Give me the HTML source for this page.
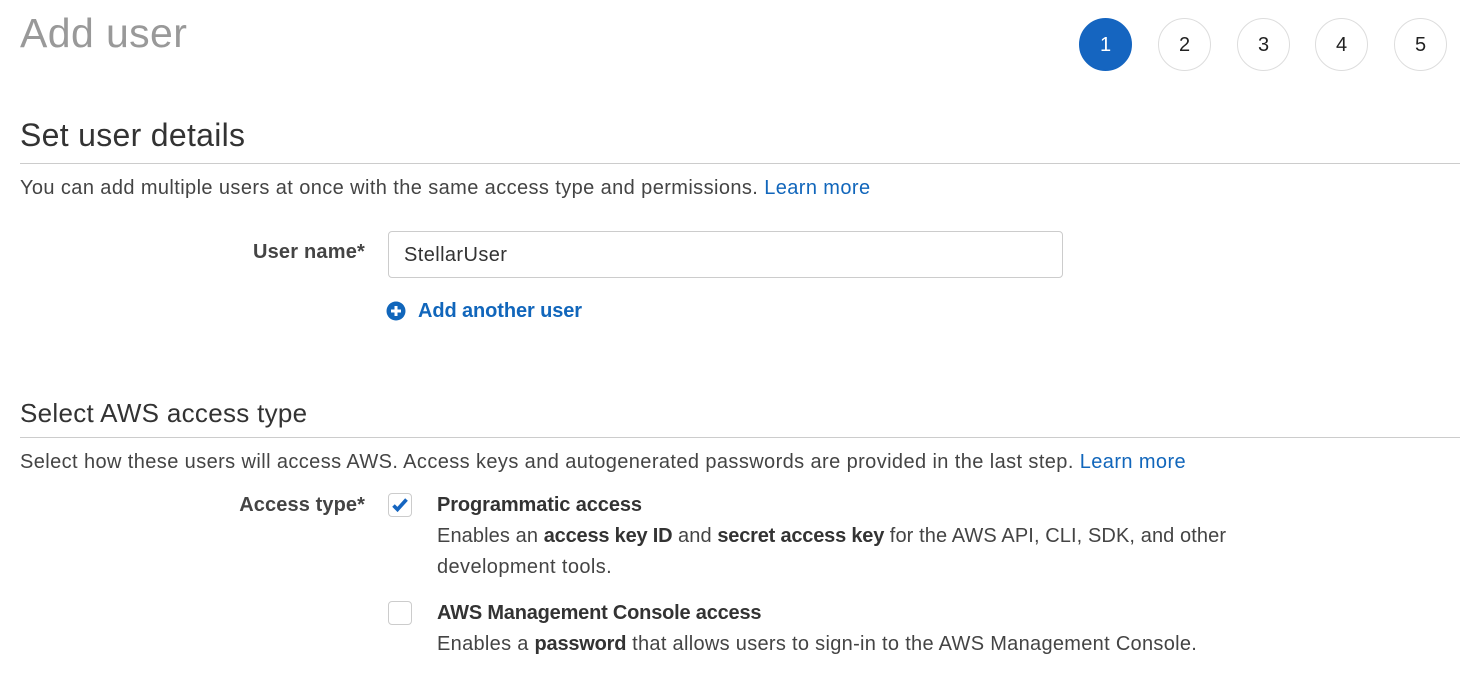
<!DOCTYPE html>
<html><head><meta charset="utf-8"><style>
body{margin:0;width:1480px;height:691px;background:#fff;font-family:"Liberation Sans",Arial,sans-serif;color:#444;position:relative;overflow:hidden}
.a{position:absolute;white-space:nowrap}
.c{position:absolute;width:51px;height:51px;border-radius:50%;border:1px solid #ddd;top:18px;text-align:center;line-height:53px;font-size:20px;color:#222;box-sizing:content-box}
.hr{position:absolute;left:20px;width:1440px;height:1px;background:#ccc}
.t{font-size:20px;letter-spacing:0.4px}
a{color:#1166bb;text-decoration:none}
b{color:#333;letter-spacing:-0.2px}
</style></head><body>
<div class="a" style="left:20px;top:10px;font-size:41px;color:#999;letter-spacing:0.4px">Add user</div>
<div class="c" style="left:1079px;background:#1565c0;border-color:#1565c0;color:#fff">1</div>
<div class="c" style="left:1158px">2</div>
<div class="c" style="left:1237px">3</div>
<div class="c" style="left:1315px">4</div>
<div class="c" style="left:1394px">5</div>
<div class="a" style="left:20px;top:117px;font-size:32px;color:#333;letter-spacing:0.3px">Set user details</div>
<div class="hr" style="top:163px"></div>
<div class="a t" style="left:20px;top:177px">You can add multiple users at once with the same access type and permissions. <a>Learn more</a></div>
<div class="a t" style="right:1115px;top:241px;font-weight:bold;color:#444;letter-spacing:0.2px">User name*</div>
<div class="a" style="left:388px;top:231px;width:673px;height:45px;border:1px solid #ccc;border-radius:4px"></div>
<div class="a t" style="left:404px;top:244px;color:#333">StellarUser</div>
<svg class="a" style="left:386px;top:301px" width="20" height="20" viewBox="0 0 20 20"><circle cx="10" cy="10" r="9.5" fill="#1166bb"/><path d="M10 5v10M5 10h10" stroke="#fff" stroke-width="3"/></svg>
<div class="a t" style="left:418px;top:300px;font-weight:bold;color:#1166bb;letter-spacing:-0.1px">Add another user</div>
<div class="a" style="left:20px;top:398px;font-size:26px;color:#333;letter-spacing:0.3px">Select AWS access type</div>
<div class="hr" style="top:437px"></div>
<div class="a t" style="left:20px;top:451px">Select how these users will access AWS. Access keys and autogenerated passwords are provided in the last step. <a>Learn more</a></div>
<div class="a t" style="right:1115px;top:494px;font-weight:bold;color:#444;letter-spacing:0.1px">Access type*</div>
<div class="a" style="left:388px;top:493px;width:22px;height:22px;border:1px solid #ccc;border-radius:4px"></div>
<svg class="a" style="left:390px;top:495px" width="20" height="20" viewBox="0 0 20 20"><path d="M3.5 10.5l4 4 9-10" stroke="#1565c0" stroke-width="3.6" fill="none"/></svg>
<div class="a t" style="left:437px;top:494px;font-weight:bold;color:#333;letter-spacing:-0.1px">Programmatic access</div>
<div class="a t" style="left:437px;top:525px;letter-spacing:0.1px">Enables an <b>access key ID</b> and <b>secret access key</b> for the AWS API, CLI, SDK, and other</div>
<div class="a t" style="left:437px;top:556px">development tools.</div>
<div class="a" style="left:388px;top:601px;width:22px;height:22px;border:1px solid #ccc;border-radius:4px"></div>
<div class="a t" style="left:437px;top:602px;font-weight:bold;color:#333;letter-spacing:-0.2px">AWS Management Console access</div>
<div class="a t" style="left:437px;top:633px;letter-spacing:0.3px">Enables a <b>password</b> that allows users to sign-in to the AWS Management Console.</div>
</body></html>
